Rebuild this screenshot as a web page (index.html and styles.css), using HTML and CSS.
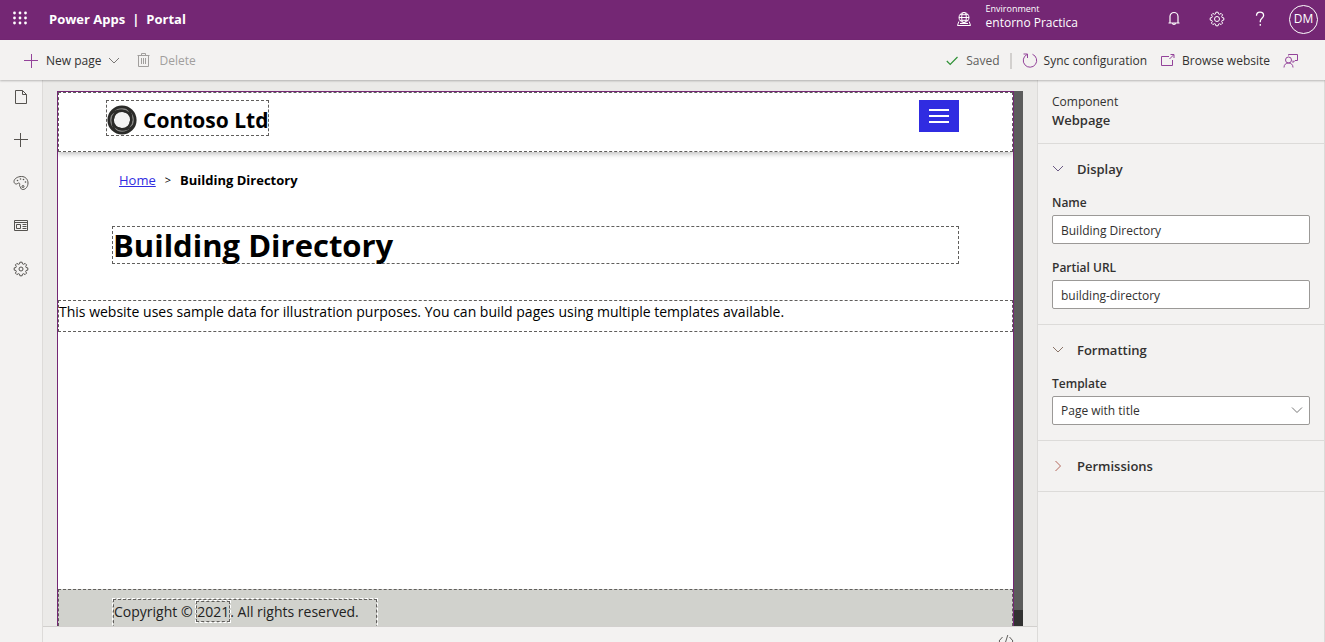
FILE: index.html
```html
<!DOCTYPE html>
<html lang="en">
<head>
<meta charset="utf-8">
<title>Power Apps | Portal</title>
<link rel="stylesheet" href="styles.css">
</head>
<body>
<div class="app">
  <header class="topbar">
    <button class="icon-btn waffle" aria-label="App launcher">
      <svg width="16" height="16" viewBox="0 0 16 16" fill="currentColor"><circle cx="2.500" cy="2" r="1.400"/><circle cx="8" cy="2" r="1.400"/><circle cx="13.500" cy="2" r="1.400"/><circle cx="2.500" cy="7" r="1.400"/><circle cx="8" cy="7" r="1.400"/><circle cx="13.500" cy="7" r="1.400"/><circle cx="2.500" cy="12" r="1.400"/><circle cx="8" cy="12" r="1.400"/><circle cx="13.500" cy="12" r="1.400"/></svg>
    </button>
    <div class="brand"><span>Power Apps</span><span>|</span><span>Portal</span></div>
    <button class="environment">
      <svg width="16" height="16" viewBox="0 0 16 16" fill="none" stroke="currentColor"><circle cx="8" cy="6.500" r="5"/><ellipse cx="8" cy="6.500" rx="2.300" ry="5"/><path d="M3 6.500h10M4 3.700h8M4 9.300h8M2.800 10.500 1.500 14.500h13l-1.300-4M4 12.500h8"/></svg>
      <span class="environment-text"><span class="environment-label">Environment</span><span class="environment-name">entorno Practica</span></span>
    </button>
    <nav class="top-actions">
      <button class="icon-btn" aria-label="Notifications"><svg width="16" height="16" viewBox="0 0 16 16" fill="none" stroke="currentColor" stroke-width="1.200"><path d="M2.500 12h11M4 12V5.500a4 4 0 0 1 8 0V12M6.500 12a1.500 1.500 0 0 0 3 0"/></svg></button>
      <button class="icon-btn" aria-label="Settings"><svg width="16" height="16" viewBox="0 0 16 16" fill="none" stroke="currentColor" stroke-linejoin="round"><path d="M6.900 1.200h2.200l.4 1.700 1.100.4 1.500-.9 1.500 1.500-.9 1.500.4 1.100 1.700.4v2.200l-1.700.4-.4 1.100.9 1.500-1.500 1.500-1.500-.9-1.100.4-.4 1.700H6.900l-.4-1.700-1.100-.4-1.500.9-1.500-1.500.9-1.500-.4-1.100-1.700-.4V6.900l1.700-.4.4-1.100-.9-1.500 1.500-1.500 1.500.9 1.100-.4z"/><circle cx="8" cy="8" r="2.500"/></svg></button>
      <button class="icon-btn" aria-label="Help"><svg width="16" height="16" viewBox="0 0 16 16" fill="none" stroke="currentColor" stroke-width="1.300"><path d="M4.500 4.800C4.500 2.500 6 1.200 8 1.200s3.600 1.300 3.600 3.300c0 2.500-3.300 3-3.300 5.500v1.200M8.300 13v1.800"/></svg></button>
    </nav>
    <button class="avatar">DM</button>
  </header>

  <div class="commandbar">
    <button class="command"><svg class="accent" width="16" height="16" viewBox="0 0 16 16" fill="none" stroke="currentColor"><path d="M1 7.500h14M8.500 1v14"/></svg><span>New page</span><svg width="12" height="12" viewBox="0 0 12 12" fill="none" stroke="#797775"><path d="m1 3 5 5 5-5"/></svg></button>
    <button class="command" disabled><svg width="16" height="16" viewBox="0 0 16 16" fill="none" stroke="currentColor"><path d="M1.500 2.500h12M5.500 2.500v-2h4v2M2.500 2.500v11h10v-11M5.500 5v6M7.500 5v6M9.500 5v6"/></svg><span>Delete</span></button>
    <div class="command-end">
      <span class="saved"><svg width="12" height="12" viewBox="0 0 12 12" fill="none" stroke="currentColor" stroke-width="1.200"><path d="m.8 6 3.400 3.400L11.500 2"/></svg><span>Saved</span></span>
      <span class="divider"></span>
      <button class="command"><svg class="accent" width="16" height="16" viewBox="0 0 16 16" fill="none" stroke="currentColor"><path d="M10.500 1.300A6.700 6.700 0 1 1 5 1.500M1.500 1h4v4"/></svg><span>Sync configuration</span></button>
      <button class="command"><svg class="accent" width="16" height="16" viewBox="0 0 16 16" fill="none" stroke="currentColor"><path d="M9 3.500H1.500v9h11V7M9.500 6l4-4M10.500 1.500H14V5"/></svg><span>Browse website</span></button>
      <button class="command" aria-label="Feedback"><svg class="accent" width="16" height="16" viewBox="0 0 16 16" fill="none" stroke="currentColor"><path d="M5.500 2.500v-1h9v6h-2.500l-2 2v-2M1 14.500c0-3 2-4.500 4.500-4.500s4.500 1.500 4.500 4.500"/><circle cx="5.500" cy="7" r="3"/></svg></button>
    </div>
  </div>

  <div class="workspace">
    <nav class="rail">
      <button class="icon-btn" aria-label="Pages"><svg width="16" height="16" viewBox="0 0 16 16" fill="none" stroke="currentColor"><path d="M2.500 1.500h7l4 4v9h-11zM9.500 1.500v4h4"/></svg></button>
      <button class="icon-btn" aria-label="Components"><svg width="16" height="16" viewBox="0 0 16 16" fill="none" stroke="currentColor"><path d="M1 7.500h14M7.500 1v14"/></svg></button>
      <button class="icon-btn" aria-label="Themes"><svg width="16" height="16" viewBox="0 0 16 16" fill="none" stroke="currentColor"><path d="M8.500 1.500c-4 0-7.500 2.300-7.500 5C1 8 2 9 3.500 9c1 0 1.300-1 2.200-1s1.300.7 1 1.700c-.4 1.300 0 2 .8 2.300.3 2 1.300 2.500 2.300 2.500 3 0 5.200-3 5.200-6.500s-2.500-6.500-6.500-6.500z"/><circle cx="10" cy="11.500" r="1"/><g fill="currentColor" stroke="none"><circle cx="4.500" cy="5.500" r=".8"/><circle cx="7.500" cy="4" r=".8"/><circle cx="10.500" cy="4.500" r=".8"/><circle cx="12.500" cy="7" r=".8"/></g></svg></button>
      <button class="icon-btn" aria-label="Templates"><svg width="16" height="16" viewBox="0 0 16 16" fill="none" stroke="currentColor"><path d="M1.500 2.500h13v10h-13zM1.500 4.500h13M3.500 6.500h4v4h-4zM9.500 6.500h4M9.500 8.500h4M9.500 10.500h4"/></svg></button>
      <button class="icon-btn" aria-label="Site settings"><svg width="16" height="16" viewBox="0 0 16 16" fill="none" stroke="currentColor" stroke-linejoin="round"><path d="M6.900 1.200h2.200l.4 1.700 1.100.4 1.500-.9 1.500 1.500-.9 1.500.4 1.100 1.700.4v2.200l-1.700.4-.4 1.100.9 1.500-1.500 1.500-1.500-.9-1.100.4-.4 1.700H6.900l-.4-1.700-1.100-.4-1.500.9-1.500-1.500.9-1.500-.4-1.100-1.700-.4V6.900l1.700-.4.4-1.100-.9-1.500 1.500-1.500 1.500.9 1.100-.4z"/><circle cx="8" cy="8" r="2"/></svg></button>
    </nav>

    <main class="canvas">
      <div class="stage">
        <div class="site">
          <div class="site-header editable">
            <div class="logo editable">
              <svg width="30" height="30" viewBox="0 0 30 30" fill="none" stroke="#2b2b29"><circle cx="15" cy="15" r="11" fill="#f3f3f3" stroke="#8a8a88" stroke-width="5"/><circle cx="15" cy="15" r="13.200" stroke-width="2.800"/><circle cx="15" cy="15" r="9.300" stroke-width="2.400"/><path stroke-width="2" d="M3 10c3-4 10-6 16-3M20 3c4 3 6 10 3 16M27 20c-3 4-10 6-16 3M10 27c-4-3-6-10-3-16"/></svg>
              <span>Contoso Ltd</span>
            </div>
            <button class="menu-btn" aria-label="Menu"><svg width="20" height="14" viewBox="0 0 20 14" fill="#fff"><path d="M0 0h20v2H0zM0 6h20v2H0zM0 12h20v2H0z"/></svg></button>
          </div>
          <div class="breadcrumb"><a href="#">Home</a><span class="sep">&gt;</span><b>Building Directory</b></div>
          <h1 class="page-title editable">Building Directory</h1>
          <p class="copy editable">This website uses sample data for illustration purposes. You can build pages using multiple templates available.</p>
          <footer class="site-footer editable">
            <div class="copyright editable">Copyright © <span class="year editable">2021</span>. All rights reserved.</div>
          </footer>
        </div>
        <div class="scrollbar"><div class="scroll-thumb"></div></div>
      </div>
      <div class="statusbar"><button class="code-btn" aria-label="Source code"><svg width="16" height="14" viewBox="0 0 16 14" fill="none" stroke="currentColor"><path d="M4.500 3 1 7l3.500 4M11.500 3 15 7l-3.500 4M9.800 1 6 13"/></svg></button></div>
    </main>

    <aside class="panel">
      <section class="panel-head"><div>Component</div><strong>Webpage</strong></section>
      <section class="group">
        <button class="group-title"><svg width="12" height="12" viewBox="0 0 12 12" fill="none" stroke="#6b5a85"><path d="m1 3 5 5 5-5"/></svg>Display</button>
        <label class="field-label" for="name">Name</label>
        <input class="field" id="name" type="text" value="Building Directory">
        <label class="field-label" for="url">Partial URL</label>
        <input class="field" id="url" type="text" value="building-directory">
      </section>
      <section class="group">
        <button class="group-title"><svg width="12" height="12" viewBox="0 0 12 12" fill="none" stroke="#8a7468"><path d="m1 3 5 5 5-5"/></svg>Formatting</button>
        <label class="field-label" for="template">Template</label>
        <div class="select-wrap">
          <select class="field" id="template"><option>Page with title</option></select>
          <svg class="select-arrow" width="12" height="12" viewBox="0 0 12 12" fill="none" stroke="currentColor"><path d="m1 3.500 5 5 5-5"/></svg>
        </div>
      </section>
      <section class="group">
        <button class="group-title"><svg width="12" height="12" viewBox="0 0 12 12" fill="none" stroke="#b5685c"><path d="m3.500 1 5 5-5 5"/></svg>Permissions</button>
      </section>
    </aside>
  </div>
</div>
</body>
</html>
```
FILE: styles.css
```css
* { box-sizing: border-box; }
body {
  margin: 0;
  font: 12px/20px "Open Sans", "Noto Sans", sans-serif;
  color: #323130;
}
button {
  font: inherit;
  color: inherit;
  background: none;
  border: 0;
  padding: 0;
}
svg { flex: none; display: block; }
.app {
  height: 100vh;
  display: flex;
  flex-direction: column;
  overflow: hidden;
  background: #f3f2f1;
}

.topbar {
  flex: none;
  height: 40px;
  display: flex;
  align-items: center;
  padding: 0 7px 2px 12px;
  background: #742774;
  color: #fff;
}
.icon-btn { display: flex; justify-content: center; align-items: center; }
.brand {
  display: flex;
  gap: 7px;
  margin-left: 21px;
  font-size: 13px;
  font-weight: 700;
}
.environment {
  display: flex;
  align-items: center;
  gap: 14px;
  margin-left: auto;
  text-align: left;
}
.environment-text { display: flex; flex-direction: column; padding-bottom: 4px; }
.environment-label { font-size: 9px; line-height: 12px; }
.environment-name { line-height: 16px; }
.top-actions { display: flex; gap: 27px; margin: 0 21px 0 88px; }
.avatar {
  width: 29px;
  height: 29px;
  border: 1px solid #fff;
  border-radius: 50%;
}

.commandbar {
  flex: none;
  height: 40px;
  display: flex;
  align-items: center;
  gap: 16px;
  padding: 1px 26px 0 23px;
  position: relative;
  box-shadow: 0 1px 2px rgba(0, 0, 0, .25);
}
.command { display: flex; align-items: center; gap: 7px; }
.command:disabled { color: #a19f9d; }
.accent { color: #93439a; }
.command-end { display: flex; align-items: center; gap: 10px; margin-left: auto; }
.command-end .command { gap: 6px; }
.command-end .command + .command { margin-left: 3px; }
.saved { display: flex; gap: 8px; align-items: center; color: #605e5c; }
.saved svg { color: #2f9136; }
.divider { width: 2px; height: 16px; background: #d2d0ce; }

.workspace { flex: 1; min-height: 0; display: flex; }
.rail {
  flex: none;
  width: 43px;
  display: flex;
  flex-direction: column;
  align-items: center;
  gap: 27px;
  padding: 9px 1px 0 0;
  color: #55534f;
  border-right: 1px solid #dddbd9;
}
.canvas {
  flex: 1;
  min-width: 0;
  display: flex;
  flex-direction: column;
  background: #ebeae8;
}
.stage { flex: 1; min-height: 0; display: flex; margin: 11px 14px 0; }
.site {
  flex: 1;
  min-width: 0;
  display: flex;
  flex-direction: column;
  overflow: hidden;
  background: #fff;
  color: #000;
  border: 1px solid #742774;
  border-bottom: 0;
}
.editable { border: 1px dashed #605e5c; }
.site-header {
  flex: none;
  height: 60px;
  display: flex;
  justify-content: space-between;
  align-items: flex-start;
  padding: 7px 53px 0 47px;
  box-shadow: 0 2px 5px rgba(0, 0, 0, .25);
}
.logo {
  height: 36px;
  display: flex;
  align-items: center;
  gap: 6px;
  padding-top: 4px;
  font-size: 21px;
  font-weight: 700;
}
.menu-btn {
  width: 40px;
  height: 32px;
  display: grid;
  place-items: center;
  background: #302ce1;
}
.breadcrumb {
  display: flex;
  gap: 9px;
  margin: 18px 0 36px 61px;
  font-size: 13px;
}
.breadcrumb a { color: #302ce1; }
.breadcrumb .sep { font-size: 11px; }
.page-title {
  margin: 0 54px 36px;
  font-size: 31px;
  line-height: 36px;
  font-weight: 700;
}
.copy { margin: 0; height: 32px; font-size: 14px; line-height: 22px; }
.site-footer {
  flex: none;
  height: 37px;
  margin-top: auto;
  padding: 9px 54px 0;
  border-bottom: 0;
  background: #d1d2cd;
  color: #222;
  font-size: 14px;
}
.copyright {
  height: 40px;
  width: 264px;
  line-height: 24px;
  outline: 1px dashed #fff;
}
.year { outline: 1px dashed #fff; }
.scrollbar { width: 9px; background: #5c5c5c; display: flex; align-items: flex-end; }
.scroll-thumb { width: 100%; height: 16px; background: #323232; }
.statusbar {
  flex: none;
  height: 16px;
  display: flex;
  justify-content: flex-end;
  padding: 7px 23px 0;
  overflow: hidden;
  background: #f3f2f1;
  border-top: 1px solid #d2d0ce;
}
.code-btn { align-self: flex-start; color: #605e5c; }

.panel {
  flex: none;
  width: 288px;
  border-left: 1px solid #dcdbd9;
  border-right: 1px solid #dcdbd9;
}
.panel-head {
  height: 64px;
  padding: 12px 14px 0;
  line-height: 19px;
  border-bottom: 1px solid #dcdbd9;
}
.panel-head strong { font-size: 13px; font-weight: 600; }
.group { padding: 15px 14px; border-bottom: 1px solid #dcdbd9; }
.group-title {
  display: flex;
  align-items: center;
  gap: 13px;
  font-size: 13px;
  font-weight: 600;
}
.field-label {
  display: block;
  margin-top: 14px;
  padding-bottom: 2px;
  font-weight: 600;
}
.field {
  display: block;
  width: 100%;
  height: 29px;
  padding: 1px 8px 0;
  border: 1px solid #9b9997;
  border-radius: 2px;
  background: #fff;
  color: inherit;
  font: inherit;
  appearance: none;
}
.select-wrap { position: relative; }
.select-arrow { position: absolute; right: 7px; top: 8px; pointer-events: none; color: #777; }
```
